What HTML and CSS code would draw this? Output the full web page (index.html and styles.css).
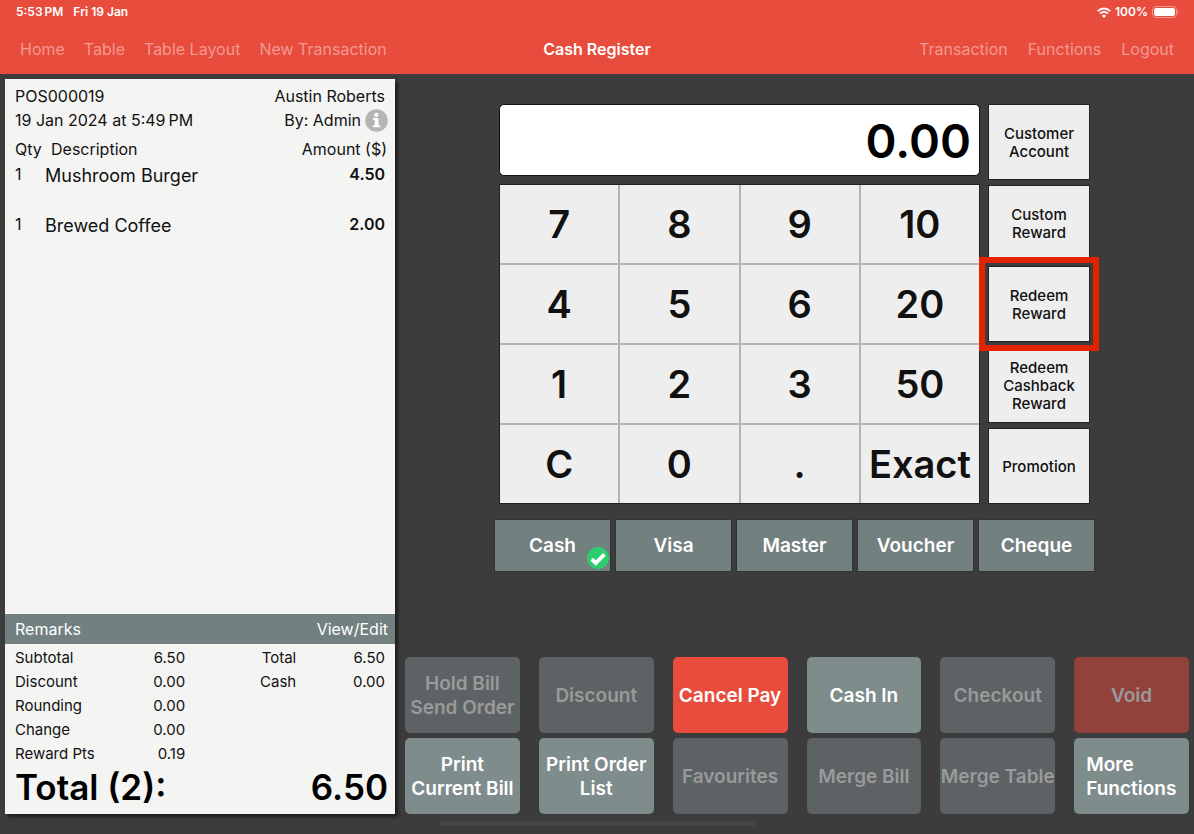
FILE: index.html
```html
<!DOCTYPE html>
<html lang="en">
<head>
<meta charset="utf-8">
<meta name="viewport" content="width=device-width, initial-scale=1">
<title>Cash Register</title>
<link rel="stylesheet" href="styles.css">
</head>
<body>
<header class="top">
  <div class="status">
    <div class="status-side"><span>5:53&#8201;PM</span><span>Fri 19 Jan</span></div>
    <div class="status-icons">
      <svg width="14" height="11" viewBox="0 0 14 11" aria-hidden="true"><g fill="none" stroke="#fff" stroke-width="2"><path d="M.8 4.1a8.8 8.8 0 0 1 12.4 0"/><path d="M3.1 6.5a5.5 5.5 0 0 1 7.8 0"/></g><path d="M7 10.9 4.9 8.7a3 3 0 0 1 4.2 0z" fill="#fff"/></svg>
      <span>100%</span>
      <svg width="27" height="12" viewBox="0 0 27 12" aria-hidden="true"><rect x=".5" y=".5" width="24" height="11" rx="3.5" fill="none" stroke="#f2948a"/><rect x="2" y="2" width="21" height="8" rx="2.2" fill="#fff"/><path d="M25.5 4v4q1.2-.6 1.2-2t-1.2-2z" fill="#f2948a"/></svg>
    </div>
  </div>
  <nav class="nav">
    <div class="nav-group"><a href="#">Home</a><a href="#">Table</a><a href="#">Table Layout</a><a href="#">New Transaction</a></div>
    <h1>Cash Register</h1>
    <div class="nav-group nav-end"><a href="#">Transaction</a><a href="#">Functions</a><a href="#">Logout</a></div>
  </nav>
</header>
<main class="main">
  <section class="receipt">
    <div class="line"><span>POS000019</span><span>Austin Roberts</span></div>
    <div class="line line-by"><span>19 Jan 2024 at 5:49&#8201;PM</span>
      <span class="by">By: Admin
        <button class="info" type="button" aria-label="Information"><svg width="23" height="23" viewBox="0 0 23 23" aria-hidden="true"><circle cx="11.5" cy="11.5" r="11.3" fill="#b5b5b5"/><circle cx="11.3" cy="5.9" r="2.1" fill="#fff"/><path d="M8 9.1h5.5v7.2h1.8v1.9H8v-1.9h1.8v-5.3H8z" fill="#fff"/></svg></button>
      </span>
    </div>
    <div class="items">
      <table class="item-table">
        <thead><tr><th class="qty">Qty</th><th class="desc-head">Description</th><th class="amount-head">Amount ($)</th></tr></thead>
        <tbody>
          <tr><td>1</td><td class="desc">Mushroom Burger</td><td class="amount">4.50</td></tr>
          <tr><td>1</td><td class="desc">Brewed Coffee</td><td class="amount">2.00</td></tr>
        </tbody>
      </table>
    </div>
    <div class="remarks"><span>Remarks</span><a href="#">View/Edit</a></div>
    <table class="summary">
      <colgroup><col class="c-label"><col class="c-value"><col class="c-label2"><col></colgroup>
      <tbody>
        <tr><th>Subtotal</th><td>6.50</td><th class="right">Total</th><td>6.50</td></tr>
        <tr><th>Discount</th><td>0.00</td><th class="right">Cash</th><td>0.00</td></tr>
        <tr><th>Rounding</th><td>0.00</td><td></td><td></td></tr>
        <tr><th>Change</th><td>0.00</td><td></td><td></td></tr>
        <tr><th>Reward Pts</th><td>0.19</td><td></td><td></td></tr>
      </tbody>
    </table>
    <div class="grand"><span>Total (2):</span><span>6.50</span></div>
  </section>
  <section class="work">
    <div class="pay">
      <div class="entry">
        <div class="pad-col">
          <input class="display" type="text" value="0.00" aria-label="Amount" readonly>
          <div class="pad">
            <button type="button">7</button><button type="button">8</button><button type="button">9</button><button type="button">10</button>
            <button type="button">4</button><button type="button">5</button><button type="button">6</button><button type="button">20</button>
            <button type="button">1</button><button type="button">2</button><button type="button">3</button><button type="button">50</button>
            <button type="button">C</button><button type="button">0</button><button type="button">.</button><button type="button">Exact</button>
          </div>
        </div>
        <div class="side">
          <button type="button">Customer Account</button>
          <button type="button">Custom Reward</button>
          <button type="button" class="marked">Redeem Reward</button>
          <button type="button">Redeem Cashback Reward</button>
          <button type="button">Promotion</button>
        </div>
      </div>
      <div class="methods">
        <button type="button" aria-pressed="true">Cash<svg class="tick" width="22" height="22" viewBox="0 0 22 22" aria-hidden="true"><circle cx="11" cy="11" r="11" fill="#2ecc71"/><path d="m4.7 12.1 4.1 3.9L17.4 7.4" fill="none" stroke="#fff" stroke-width="3.8"/></svg></button>
        <button type="button">Visa</button>
        <button type="button">Master</button>
        <button type="button">Voucher</button>
        <button type="button">Cheque</button>
      </div>
    </div>
    <div class="actions">
      <button type="button" disabled>Hold Bill<br>Send Order</button>
      <button type="button" disabled>Discount</button>
      <button type="button" class="red">Cancel Pay</button>
      <button type="button">Cash In</button>
      <button type="button" disabled>Checkout</button>
      <button type="button" class="red" disabled>Void</button>
      <button type="button">Print<br>Current Bill</button>
      <button type="button">Print Order<br>List</button>
      <button type="button" disabled>Favourites</button>
      <button type="button" disabled>Merge Bill</button>
      <button type="button" disabled>Merge Table</button>
      <button type="button" class="more">More<br>Functions</button>
    </div>
  </section>
</main>
<footer class="foot"><div class="home-bar"></div></footer>
</body>
</html>
```
FILE: styles.css
```css
* { box-sizing: border-box; }
body {
  margin: 0;
  min-height: 100vh;
  display: flex;
  flex-direction: column;
  background: #3c3c3c;
  color: #111;
  font: 16px/24px Inter, "Liberation Sans", sans-serif;
}
button, input { font: inherit; color: inherit; margin: 0; padding: 0; border: 0; border-radius: 0; }
a { color: inherit; text-decoration: none; }

.top { background: #e84c3d; color: #fff; }
.status {
  display: flex;
  justify-content: space-between;
  padding: 0 15px 0 16px;
  font-size: 12px;
  font-weight: 600;
  line-height: 24px;
}
.status-side { display: flex; gap: 10px; }
.status-icons { display: flex; align-items: center; gap: 4px; }
.nav {
  display: grid;
  grid-template-columns: 1fr auto 1fr;
  align-items: center;
  height: 50px;
  padding: 0 20px;
}
.nav-group { display: flex; gap: 19px; color: #f29a92; white-space: nowrap; }
.nav-end { justify-content: flex-end; gap: 20px; }
.nav h1 { margin: 0; font-size: 16px; font-weight: 600; }

.main {
  flex: 1;
  display: grid;
  grid-template-columns: 390fr 784fr;
  gap: 10px;
  padding: 5px 5px 0;
}
.receipt {
  display: flex;
  flex-direction: column;
  padding-top: 5px;
  background: #f4f4f3;
  box-shadow: 3px 3px 3px #1e1e1e;
}
.line { display: flex; justify-content: space-between; padding: 0 10px; }
.line-by { padding-right: 7px; margin-bottom: 5px; }
.by { display: flex; align-items: center; gap: 4px; }
.info { display: flex; background: none; }
.items { flex: 1; padding: 0 8px 0 10px; }
.item-table { width: 100%; border-collapse: collapse; }
.item-table th, .summary th { padding: 0; font-weight: 400; text-align: left; }
.item-table .qty { width: 30px; }
.item-table .desc-head { padding-left: 6px; }
.item-table .amount-head { text-align: right; }
.item-table td { height: 50px; padding: 1px 0 0; vertical-align: top; }
.item-table .desc { padding-top: 3px; font-size: 18px; }
.item-table .amount { padding-right: 2px; font-weight: 600; text-align: right; }
.remarks {
  display: flex;
  justify-content: space-between;
  padding: 3px 7px 3px 10px;
  background: #728080;
  color: #fff;
}
.summary {
  width: 100%;
  margin-top: 2px;
  padding: 0 10px;
  border-spacing: 0;
  table-layout: fixed;
  font-size: 15px;
}
.c-label, .c-value { width: 23%; }
.c-label2 { width: 30%; }
.summary td, .summary .right { padding: 0; text-align: right; }
.grand {
  display: flex;
  justify-content: space-between;
  padding: 0 7px 6px 10px;
  color: #000;
  font-size: 35px;
  font-weight: 600;
  line-height: 42px;
}

.work {
  display: flex;
  flex-direction: column;
  justify-content: space-between;
  padding-top: 25px;
}
.pay { width: 100%; max-width: 606px; margin: 0 auto; padding-right: 5px; }
.entry {
  display: grid;
  grid-template-columns: 481fr 102fr;
  gap: 8px;
  padding: 0 5px;
}
.pad-col { display: flex; flex-direction: column; gap: 8px; }
.display {
  width: 100%;
  height: 72px;
  padding: 0 8px;
  border: 1px solid #111;
  border-radius: 5px;
  background: #fff;
  color: #000;
  font-size: 47px;
  font-weight: 600;
  text-align: right;
}
.pad {
  flex: 1;
  display: grid;
  grid-template-columns: repeat(4, 1fr);
  gap: 2px;
  background: #b8b5b0;
  border: 1px solid #222;
}
.pad button { background: #eee; color: #111; font-size: 38px; font-weight: 600; line-height: 48px; }
.side { display: grid; grid-auto-rows: 76px; gap: 5px; }
.side button {
  padding: 2px 8px 0;
  border: 1px solid #222;
  background: #eee;
  color: #111;
  font-size: 15px;
  font-weight: 500;
  line-height: 18px;
}
.side .marked { position: relative; outline: 6px solid #e32200; outline-offset: 3px; }
.methods {
  display: grid;
  grid-template-columns: repeat(5, 1fr);
  gap: 4px;
  margin-top: 15px;
}
.methods button {
  position: relative;
  height: 53px;
  border: 1px solid #333;
  background: #728080;
  color: #fff;
  font-size: 19px;
  font-weight: 600;
}
.tick { position: absolute; right: 1px; bottom: 2px; }

.actions {
  display: grid;
  grid-template-columns: repeat(6, 1fr);
  grid-auto-rows: 76px;
  gap: 5px 19px;
}
.actions button {
  padding-top: 2px;
  border-radius: 5px;
  background: #7e8c8c;
  color: #fff;
  font-size: 19px;
  font-weight: 600;
  line-height: 24px;
  white-space: nowrap;
}
.actions button:disabled { background: #5d6364; color: #9a9a9a; }
.actions .red { background: #e84c3d; }
.actions .red:disabled { background: #92423b; }
.actions .more { padding-left: 12px; text-align: left; }

.foot { display: flex; justify-content: center; height: 20px; padding-top: 7px; }
.home-bar { width: 315px; height: 5px; border-radius: 3px; background: #444746; }
```
